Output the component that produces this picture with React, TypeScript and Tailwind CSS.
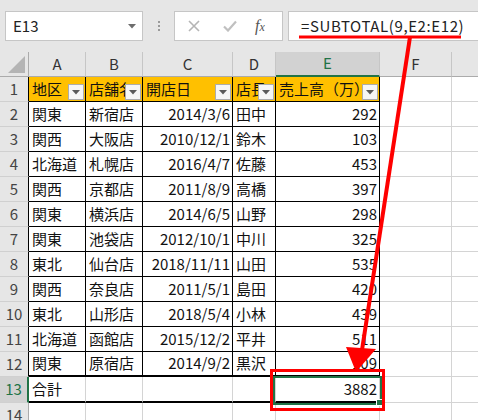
import React from 'react';

const font = { fontFamily: '"Noto Sans CJK JP", "Noto Sans", sans-serif' };

const colW = ['w-[57px]', 'w-[57px]', 'w-[90px]', 'w-[43px]', 'w-[104px]'];
const letters = ['A', 'B', 'C', 'D', 'E'];

const headers = ['地区', '店舗名', '開店日', '店長', '売上高（万）'];

const rows: string[][] = [
  ['関東', '新宿店', '2014/3/6', '田中', '292'],
  ['関西', '大阪店', '2010/12/1', '鈴木', '103'],
  ['北海道', '札幌店', '2016/4/7', '佐藤', '453'],
  ['関西', '京都店', '2011/8/9', '高橋', '397'],
  ['関東', '横浜店', '2014/6/5', '山野', '298'],
  ['関東', '池袋店', '2012/10/1', '中川', '325'],
  ['東北', '仙台店', '2018/11/11', '山田', '535'],
  ['関西', '奈良店', '2011/5/1', '島田', '420'],
  ['東北', '山形店', '2018/5/4', '小林', '439'],
  ['北海道', '函館店', '2015/12/2', '平井', '511'],
  ['関東', '原宿店', '2014/9/2', '黒沢', '109'],
];

function DropButton() {
  return (
    <span className="absolute right-[1px] bottom-[1px] flex h-[16px] w-[16px] items-center justify-center border border-[#acacac] bg-[#f6f6f6]">
      <svg width="8" height="5" viewBox="0 0 8 5">
        <path d="M0 0h8L4 4.5z" fill="#5a5a5a" />
      </svg>
    </span>
  );
}

function RowHead({ n, active, tableRow }: { n: number; active?: boolean; tableRow?: boolean }) {
  return (
    <div
      className={`flex w-[29px] shrink-0 items-center justify-center border-b border-b-[#d0d0d0] text-[15px] ${
        active
          ? 'border-r-2 border-r-[#217346] bg-[#d2d2d2] text-[#217346]'
          : tableRow
            ? 'border-r border-r-black bg-[#e6e6e6] text-[#444]'
            : 'border-r border-r-[#ababab] bg-[#e6e6e6] text-[#444]'
      }`}
    >
      {n}
    </div>
  );
}

function Filler({ h }: { h: string }) {
  return (
    <>
      <div className={`w-[72px] shrink-0 border-r border-b border-[#d4d4d4] ${h}`} />
      <div className={`flex-1 border-b border-[#d4d4d4] ${h}`} />
    </>
  );
}

export default function App() {
  return (
    <div className="relative h-[420px] w-[478px] overflow-hidden bg-white text-[#111]" style={font}>
      {/* formula bar */}
      <div className="flex h-[52px] items-start bg-[#e6e6e6] pt-[11px] pl-[5px]">
        <div className="flex h-[30px] w-[138px] shrink-0 items-center justify-between border border-[#c6c6c6] bg-white pr-[6px] pl-[7px]">
          <span className="text-[15px] text-[#222]">E13</span>
          <svg width="8" height="5" viewBox="0 0 8 5">
            <path d="M0 0h8L4 4.5z" fill="#6d6d6d" />
          </svg>
        </div>
        <div className="flex h-[30px] w-[31px] shrink-0 flex-col items-center justify-center gap-[2px]">
          <span className="h-[2px] w-[2px] bg-[#9a9a9a]" />
          <span className="h-[2px] w-[2px] bg-[#9a9a9a]" />
          <span className="h-[2px] w-[2px] bg-[#9a9a9a]" />
        </div>
        <div className="flex h-[30px] w-[109px] shrink-0 items-center border border-[#c6c6c6] bg-white">
          <svg className="ml-[13px]" width="12" height="12" viewBox="0 0 12 12">
            <path d="M1 1l10 10M11 1L1 11" stroke="#b5b5b5" strokeWidth="1.6" />
          </svg>
          <svg className="ml-[23px]" width="14" height="12" viewBox="0 0 14 12">
            <path d="M1 6.5l4 4L13 1.5" stroke="#c0c0c0" strokeWidth="2.2" fill="none" />
          </svg>
          <span
            className="ml-[18px] text-[16px] italic text-[#555]"
            style={{ fontFamily: '"Liberation Serif", serif' }}
          >
            f<span className="text-[12px]">x</span>
          </span>
        </div>
        <div className="ml-[5px] flex h-[30px] flex-1 items-center border-y border-l border-[#c6c6c6] bg-white pl-[12px]">
          <span className="text-[15px] tracking-[0.6px] whitespace-nowrap text-[#222]">=SUBTOTAL(9,E2:E12)</span>
        </div>
      </div>

      {/* column headers */}
      <div className="flex h-[25px]">
        <div className="relative w-[29px] shrink-0 border-r border-b border-[#ababab] bg-[#e6e6e6]">
          <svg className="absolute right-[3px] bottom-[3px]" width="17" height="17" viewBox="0 0 17 17">
            <path d="M17 0V17H0z" fill="#b4b4b4" />
          </svg>
        </div>
        {letters.map((l, i) => (
          <div
            key={l}
            className={`${colW[i]} flex shrink-0 items-center justify-center border-r border-r-[#c6c6c6] text-[15px] ${
              l === 'E'
                ? 'border-b-2 border-b-[#217346] bg-[#d2d2d2] text-[#217346]'
                : 'border-b border-b-[#ababab] bg-[#e6e6e6] text-[#333]'
            }`}
          >
            {l}
          </div>
        ))}
        <div className="flex w-[72px] shrink-0 items-center justify-center border-r border-b border-r-[#c6c6c6] border-b-[#ababab] bg-[#e6e6e6] text-[15px] text-[#333]">
          F
        </div>
        <div className="flex-1 border-b border-[#ababab] bg-[#e6e6e6]" />
      </div>

      {/* row 1 */}
      <div className="flex h-[25px]">
        <RowHead n={1} tableRow />
        {headers.map((h, i) => (
          <div
            key={h}
            className={`${colW[i]} relative flex shrink-0 items-center overflow-hidden border-r border-b border-black bg-[#ffc000] pl-[3px] text-[15px] whitespace-nowrap`}
          >
            {h}
            <DropButton />
          </div>
        ))}
        <Filler h="h-[25px]" />
      </div>

      {/* rows 2-12 */}
      {rows.map((r, ri) => {
        const last = ri === rows.length - 1;
        return (
          <div key={ri} className="flex h-[25px]">
            <RowHead n={ri + 2} tableRow />
            {r.map((v, ci) => (
              <div
                key={ci}
                className={`${colW[ci]} flex shrink-0 items-center overflow-hidden border-r border-black text-[15px] whitespace-nowrap ${
                  last ? 'border-b-2' : 'border-b'
                } ${ci === 2 || ci === 4 ? 'justify-end pr-[2px]' : 'pl-[3px]'}`}
              >
                {v}
              </div>
            ))}
            <Filler h="h-[25px]" />
          </div>
        );
      })}

      {/* row 13 */}
      <div className="flex h-[26px]">
        <RowHead n={13} active />
        {colW.map((w, ci) => (
          <div
            key={ci}
            className={`${w} flex shrink-0 items-center border-r border-b-2 border-r-[#d4d4d4] border-b-black text-[15px] ${
              ci === 4 ? 'justify-end pr-[2px]' : 'pl-[3px]'
            }`}
          >
            {ci === 0 ? '合計' : ci === 4 ? '3882' : ''}
          </div>
        ))}
        <Filler h="h-[26px]" />
      </div>

      {/* row 14 */}
      <div className="flex h-[25px]">
        <RowHead n={14} />
        {colW.map((w, ci) => (
          <div key={ci} className={`${w} shrink-0 border-r border-b border-[#d4d4d4]`} />
        ))}
        <Filler h="h-[25px]" />
      </div>

      {/* selection on E13 */}
      <div className="pointer-events-none absolute top-[376px] left-[273px] h-[29px] w-[109px] border-2 border-[#217346]" />
      <div className="pointer-events-none absolute top-[399px] left-[376px] h-[7px] w-[7px] border border-white bg-[#217346]" />

      {/* red annotation */}
      <svg className="pointer-events-none absolute inset-0" width="478" height="420" viewBox="0 0 478 420">
        <line x1="299" y1="37" x2="461" y2="37" stroke="#ff0000" strokeWidth="3" />
        <line x1="410" y1="37" x2="362" y2="350" stroke="#ff0000" strokeWidth="4" />
        <polygon points="346,347 376,349 356,372" fill="#ff0000" />
        <rect x="271.5" y="370.5" width="112" height="39" fill="none" stroke="#ff0000" strokeWidth="3" />
      </svg>
    </div>
  );
}
